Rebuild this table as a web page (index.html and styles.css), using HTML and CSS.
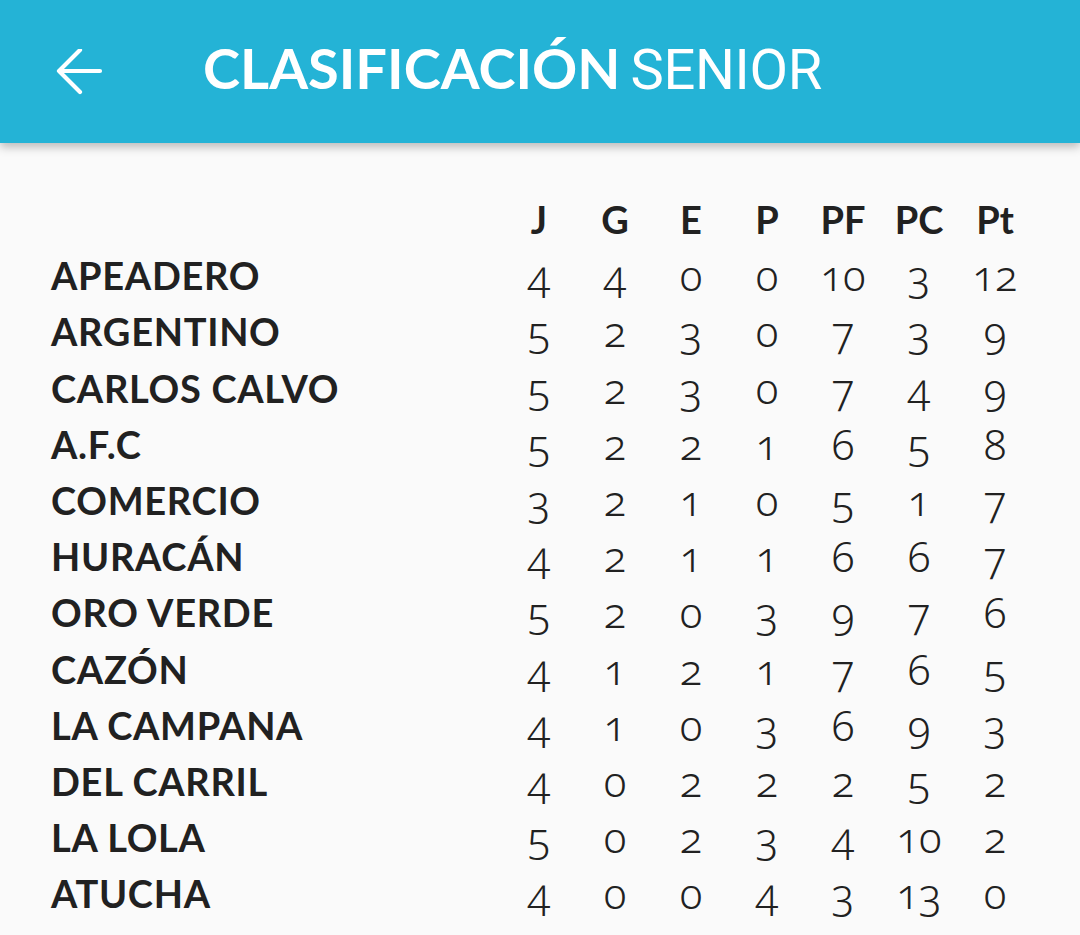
FILE: index.html
```html
<!DOCTYPE html>
<html lang="es">
<head>
<meta charset="utf-8">
<title>Clasificación Senior</title>
<link rel="stylesheet" href="styles.css">
</head>
<body>
<header class="appbar">
  <svg class="back" width="48" height="48" viewBox="0 0 48 48" aria-hidden="true">
    <path d="M45 22 H4 M25 1 L4 22 L25 43" fill="none" stroke="#fff" stroke-width="4.2" stroke-linecap="round" stroke-linejoin="round"/>
  </svg>
  <h1 class="title"><span class="title-bold">CLASIFICACIÓN</span><span class="title-light">SENIOR</span></h1>
</header>
<main class="standings">
  <div class="grid">
    <div class="hcell name"></div>
    <div class="hcell">J</div><div class="hcell">G</div><div class="hcell">E</div><div class="hcell">P</div><div class="hcell">PF</div><div class="hcell">PC</div><div class="hcell">Pt</div>

    <div class="name">APEADERO</div><div class="num">4</div><div class="num">4</div><div class="num">0</div><div class="num">0</div><div class="num">10</div><div class="num">3</div><div class="num">12</div>
    <div class="name">ARGENTINO</div><div class="num">5</div><div class="num">2</div><div class="num">3</div><div class="num">0</div><div class="num">7</div><div class="num">3</div><div class="num">9</div>
    <div class="name">CARLOS CALVO</div><div class="num">5</div><div class="num">2</div><div class="num">3</div><div class="num">0</div><div class="num">7</div><div class="num">4</div><div class="num">9</div>
    <div class="name">A.F.C</div><div class="num">5</div><div class="num">2</div><div class="num">2</div><div class="num">1</div><div class="num">6</div><div class="num">5</div><div class="num">8</div>
    <div class="name">COMERCIO</div><div class="num">3</div><div class="num">2</div><div class="num">1</div><div class="num">0</div><div class="num">5</div><div class="num">1</div><div class="num">7</div>
    <div class="name">HURACÁN</div><div class="num">4</div><div class="num">2</div><div class="num">1</div><div class="num">1</div><div class="num">6</div><div class="num">6</div><div class="num">7</div>
    <div class="name">ORO VERDE</div><div class="num">5</div><div class="num">2</div><div class="num">0</div><div class="num">3</div><div class="num">9</div><div class="num">7</div><div class="num">6</div>
    <div class="name">CAZÓN</div><div class="num">4</div><div class="num">1</div><div class="num">2</div><div class="num">1</div><div class="num">7</div><div class="num">6</div><div class="num">5</div>
    <div class="name">LA CAMPANA</div><div class="num">4</div><div class="num">1</div><div class="num">0</div><div class="num">3</div><div class="num">6</div><div class="num">9</div><div class="num">3</div>
    <div class="name">DEL CARRIL</div><div class="num">4</div><div class="num">0</div><div class="num">2</div><div class="num">2</div><div class="num">2</div><div class="num">5</div><div class="num">2</div>
    <div class="name">LA LOLA</div><div class="num">5</div><div class="num">0</div><div class="num">2</div><div class="num">3</div><div class="num">4</div><div class="num">10</div><div class="num">2</div>
    <div class="name">ATUCHA</div><div class="num">4</div><div class="num">0</div><div class="num">0</div><div class="num">4</div><div class="num">3</div><div class="num">13</div><div class="num">0</div>
  </div>
</main>
</body>
</html>
```
FILE: styles.css
```css
html, body {
  margin: 0;
  padding: 0;
  background: #fafafa;
  height: 100%;
  overflow: hidden;
}
body {
  font-family: "Lato", "Noto Sans", sans-serif;
  color: #212121;
}
.appbar {
  height: 143px;
  background: #24b3d6;
  display: flex;
  align-items: center;
  padding-left: 55px;
  box-shadow: 0 4px 9px rgba(0, 0, 0, 0.26);
  position: relative;
  z-index: 1;
}
.back {
  flex: none;
  margin-top: 2px;
}
.title {
  margin: -5px 0 0 100px;
  color: #fff;
  display: flex;
  align-items: baseline;
  gap: 10px;
  font-weight: normal;
  line-height: 1;
}
.title-bold {
  font-family: "Lato", sans-serif;
  font-weight: 700;
  font-size: 56px;
  letter-spacing: 0;
}
.title-light {
  font-family: "Roboto", sans-serif;
  font-weight: 400;
  font-size: 56px;
  letter-spacing: -0.3px;
}
.standings {
  padding: 48px 0 0 51px;
}
.grid {
  display: grid;
  grid-template-columns: 450px repeat(7, 76px);
  grid-auto-rows: 56.2px;
  align-items: center;
}
.hcell {
  font-family: "Lato", sans-serif;
  font-weight: 700;
  font-size: 38px;
  text-align: center;
}
.name {
  font-family: "Lato", sans-serif;
  font-weight: 700;
  font-size: 38px;
  text-align: left;
  letter-spacing: 0.7px;
}
.num {
  font-family: "Noto Sans", sans-serif;
  font-weight: 300;
  font-size: 42px;
  line-height: 1;
  text-align: center;
  font-variant-numeric: oldstyle-nums;
}
```
